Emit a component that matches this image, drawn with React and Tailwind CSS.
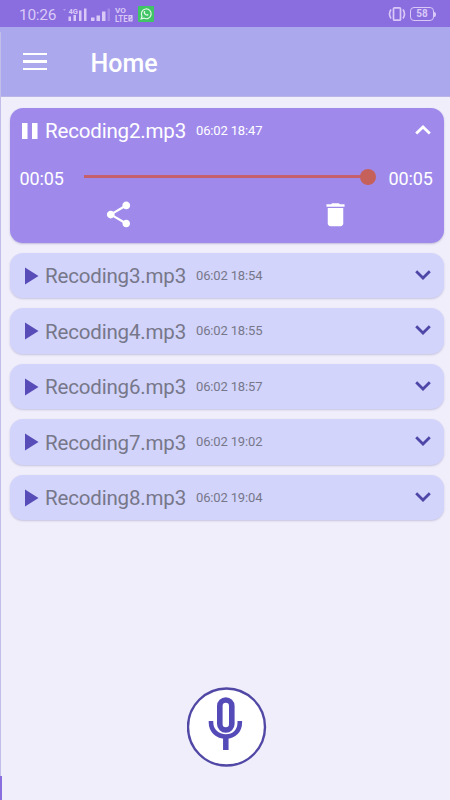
import React, { useState } from "react";

const recordings = [
  { id: 2, name: "Recoding2.mp3", date: "06:02 18:47" },
  { id: 3, name: "Recoding3.mp3", date: "06:02 18:54" },
  { id: 4, name: "Recoding4.mp3", date: "06:02 18:55" },
  { id: 6, name: "Recoding6.mp3", date: "06:02 18:57" },
  { id: 7, name: "Recoding7.mp3", date: "06:02 19:02" },
  { id: 8, name: "Recoding8.mp3", date: "06:02 19:04" },
];

const SignalIcons = () => (
  <svg width="50" height="20" viewBox="0 0 50 20" className="ml-[5px] shrink-0" fill="#d9c9f7">
    <path d="M1 5h3L2.500 7z" opacity="0.5" />
    <text x="6.500" y="9.500" fontSize="7.500" fontWeight="700" fontFamily="Roboto, sans-serif">4G</text>
    <path d="M6.500 12.500H9V17H6.500zM11.500 11H14v6h-2.500zM17 6.500h2.500V17H17zM22 4.500h2.500V17H22z" />
    <path d="M29 13.500h3.500V17H29zM34.500 11.500H38V17h-3.500zM40 7.500h3.500V17H40z" />
    <path d="M45.500 4.500H48V17h-2.500z" opacity="0.3" />
  </svg>
);

const WhatsappIcon = () => (
  <svg width="16" height="16" viewBox="0 0 16 16" className="ml-[4px] shrink-0">
    <rect width="16" height="16" rx="1" fill="#3fc566" />
    <path d="M3.200 12.800l.8-2.600a4.900 4.900 0 1 1 1.900 1.900z" fill="none" stroke="#e4f8e6" strokeWidth="1.200" />
    <path d="M6 5.200c.6-.6 1-.3 1.400.9l-.5.7c.4.8 1 1.300 1.800 1.700l.7-.6c1.200.5 1.500.8.9 1.400-.8.8-2.300.4-3.400-.6S5.200 6 6 5.200z" fill="#e4f8e6" />
  </svg>
);

const StatusBar = () => (
  <div className="flex h-[27px] items-center bg-[#8a6ddf] pl-[19px] pr-[16px] text-[#d9c9f7]">
    <span className="w-[38px] pt-[3px] text-[15.500px] leading-5 tracking-[-0.3px] whitespace-nowrap">10:26</span>
    <SignalIcons />
    <svg width="19" height="18" viewBox="0 0 19 18" className="ml-[3px] mt-[3px] shrink-0" fill="#d9c9f7" fontFamily="Roboto, sans-serif" fontWeight="700">
      <text x="0" y="7" fontSize="8" textLength="11" lengthAdjust="spacingAndGlyphs">VO</text>
      <text x="0" y="15.500" fontSize="8.500" textLength="12.500" lengthAdjust="spacingAndGlyphs">LTE</text>
      <path d="M14 9.700h3v5.100h-3zM13.700 15L17.300 9.500" fill="none" stroke="#d9c9f7" strokeWidth="1.200" />
    </svg>
    <WhatsappIcon />
    <svg width="20" height="16" viewBox="0 0 20 16" className="ml-auto mr-[3px] mt-px" fill="none" stroke="#d9c9f7" strokeWidth="1.700">
      <rect x="6.500" y="1.800" width="7" height="12.400" rx="1" />
      <path d="M4 3.500Q1 8 4 12.500M16 3.500Q19 8 16 12.500" />
    </svg>
    <div className="relative mt-px flex h-[14px] w-[24px] items-center justify-center rounded-[4px] border border-[#d9c9f7]">
      <span className="text-[10px] font-bold leading-none">58</span>
      <span className="absolute -right-[3px] h-[5px] w-[2px] rounded-r bg-[#d9c9f7]" />
    </div>
  </div>
);

const AppBar = () => (
  <header className="flex h-[70px] items-center border-b border-[#b9b5e6] bg-[#aca8ee] pl-[23px]">
    <button aria-label="Menu" className="flex w-[24px] flex-col gap-[5px]">
      <span className="h-[2.500px] bg-white" />
      <span className="h-[2.500px] bg-white" />
      <span className="h-[2.500px] bg-white" />
    </button>
    <h1 className="ml-[43.500px] pt-[4px] text-[25px] font-medium leading-7 text-white">Home</h1>
  </header>
);

const Player = () => (
  <div>
    <div className="mt-[9px] flex h-[28px] items-center justify-between pl-[10px] pr-[10px] text-[18px] text-white">
      <span className="w-[45px] pt-[3px] tracking-[-0.1px]">00:05</span>
      <div className="ml-[19.500px] mr-[13px] flex flex-1 items-center">
        <div className="h-[2.500px] flex-1 bg-[#c55f6b]" />
        <div className="-ml-[8px] size-[16px] rounded-full bg-[#c6605b]" />
      </div>
      <span className="w-[45px] pt-[3px] tracking-[-0.1px]">00:05</span>
    </div>
    <div className="mt-[8px] flex">
      <button aria-label="Share" className="flex w-1/2 justify-center">
        <svg width="31" height="31" viewBox="0 0 24 24" fill="#fff">
          <path d="M18 16.080c-.76 0-1.440.3-1.960.77L8.910 12.700c.05-.23.09-.46.09-.7s-.04-.47-.09-.7l7.050-4.110c.54.5 1.250.81 2.040.81 1.660 0 3-1.340 3-3s-1.340-3-3-3-3 1.340-3 3c0 .24.04.47.09.7L8.040 9.810C7.500 9.310 6.790 9 6 9c-1.660 0-3 1.340-3 3s1.340 3 3 3c.79 0 1.500-.31 2.040-.81l7.120 4.160c-.05.21-.08.43-.08.65 0 1.610 1.310 2.920 2.920 2.920s2.920-1.310 2.920-2.920-1.310-2.920-2.920-2.920z" />
        </svg>
      </button>
      <button aria-label="Delete" className="flex w-1/2 justify-center">
        <svg width="31" height="31" viewBox="0 0 24 24" fill="#fff">
          <path d="M6 19c0 1.100.9 2 2 2h8c1.100 0 2-.9 2-2V7H6v12zM19 4h-3.500l-1-.7h-5l-1 .7H5v2h14V4z" />
        </svg>
      </button>
    </div>
  </div>
);

const RecordingCard = ({ recording, open, onToggle }) => (
  <div
    className={
      open
        ? "h-[135px] rounded-[13px] bg-[#9f8aec] text-white shadow-[0_1px_2px_rgba(80,70,140,0.3)]"
        : "h-[45.500px] rounded-[13px] bg-[#d2d4fb] text-[#77778a] shadow-[0_1px_2px_rgba(80,70,140,0.25)]"
    }
  >
    <div className="flex h-[46px] items-center">
      <div className="flex w-[35.500px] shrink-0">
        {open ? (
          <svg width="16" height="18" viewBox="0 0 16 18" className="ml-[12.500px]" fill="#fff">
            <path d="M0 1h5.500v16H0zM10 1h5.500v16H10z" />
          </svg>
        ) : (
          <svg width="14" height="18" viewBox="0 0 14 18" className="ml-[15px]" fill="#584db8">
            <path d="M0 .5L13.500 9 0 17.500z" />
          </svg>
        )}
      </div>
      <span className="w-[151px] shrink-0 pt-px text-[20.500px] leading-6 tracking-[-0.17px] whitespace-nowrap">{recording.name}</span>
      <span className="text-[13px] leading-4 tracking-[-0.15px] whitespace-nowrap">{recording.date}</span>
      <button aria-label="Toggle" onClick={onToggle} className="-mt-[2px] ml-auto mr-[12.500px]">
        <svg width="16" height="12" viewBox="0 0 16 12" fill="none" strokeWidth="2.800" stroke={open ? "#fff" : "#4f46a8"}>
          <path d={open ? "M1.200 9.500L8 3 14.800 9.500" : "M1.200 2.300L8 9 14.800 2.300"} />
        </svg>
      </button>
    </div>
    {open && <Player />}
  </div>
);

const App = () => {
  const [openId, setOpenId] = useState(2);

  return (
    <div className="relative flex h-[800px] w-[450px] flex-col overflow-hidden bg-[#f0eefb] font-[Roboto,sans-serif]">
      <StatusBar />
      <AppBar />

      {/* Recordings */}
      <main className="flex flex-col gap-[10px] pl-[9.500px] pr-[6.500px] pt-[10.500px]">
        {recordings.map((recording) => (
          <RecordingCard
            key={recording.id}
            recording={recording}
            open={openId === recording.id}
            onToggle={() => setOpenId(openId === recording.id ? null : recording.id)}
          />
        ))}
      </main>

      {/* Record button */}
      <div className="mt-auto mb-[33px] flex justify-center pl-[3px]">
        <button aria-label="Record">
          <svg width="80" height="80" viewBox="0 0 80 80" fill="none" stroke="#554bb8">
            <circle cx="39.500" cy="40" r="38.500" fill="#fff" stroke="#5148a6" strokeWidth="2.400" />
            <rect x="32.800" y="13" width="12" height="30" rx="6" strokeWidth="5.600" />
            <path d="M24 34v1.500c0 8 6.200 14 14.800 14s14-6 14-14V34" strokeWidth="4.600" />
            <path d="M38.800 49v14" strokeWidth="5.500" />
          </svg>
        </button>
      </div>

      {/* Left edge */}
      <div className="absolute bottom-0 left-0 top-[32px] w-px bg-[#c2bee9]" />
      <div className="absolute bottom-0 left-0 h-[24px] w-[2px] bg-[#8a6ddf]" />
    </div>
  );
};

export default App;
